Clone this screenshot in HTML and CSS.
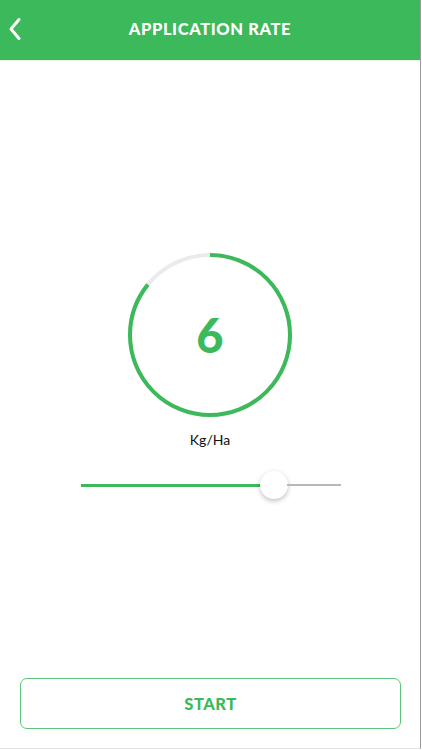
FILE: index.html
```html
<!DOCTYPE html>
<html>
<head>
    <title>Application Rate</title>
    <meta charset="UTF-8">
    <meta name="viewport" content="width=device-width, initial-scale=1.0">
    <link rel="stylesheet" href="styles.css">
</head>
<body>
    <div class="screen">
        <div class="header">
            <button class="back" aria-label="Back">
                <svg width="14" height="24" viewBox="0 0 14 24">
                    <path d="M11 2.5 L3 12 L11 21.5" fill="none" stroke="#fff" stroke-width="3" stroke-linecap="round" stroke-linejoin="round"/>
                </svg>
            </button>
            <h1>APPLICATION RATE</h1>
        </div>

        <div class="content">
            <div class="gauge">
                <svg width="168" height="168" viewBox="0 0 168 168">
                    <circle cx="84" cy="84" r="80" fill="none" stroke="#ebebeb" stroke-width="4"/>
                    <circle class="arc" cx="84" cy="84" r="80" fill="none" stroke="#3cb95a" stroke-width="4"
                        stroke-dasharray="430.8 502.7" transform="rotate(-90 84 84)"/>
                </svg>
                <span class="value">6</span>
            </div>
            <p class="unit">Kg/Ha</p>

            <div class="slider">
                <div class="track-fill"></div>
                <div class="thumb"></div>
                <div class="track-rest"></div>
            </div>
        </div>

        <div class="footer">
            <button class="start">START</button>
        </div>
    </div>
</body>
</html>
```

FILE: styles.css
```css
body {
    margin: 0;
    font-family: Lato, "Open Sans", sans-serif;
    background: #fff;
}
.screen {
    width: 420px;
    height: 748px;
    border-right: 1px solid #9a9a9a;
    border-bottom: 1px solid #e2e2e2;
    display: flex;
    flex-direction: column;
}
.header {
    height: 60px;
    background-color: #3cb95a;
    border-bottom: 1px solid #e6efe8;
    display: flex;
    align-items: center;
    justify-content: center;
    position: relative;
}
.header h1 {
    margin: 0 0 3px;
    color: #fff;
    font-size: 16.5px;
    font-weight: 900;
    letter-spacing: 0.6px;
}
.back {
    position: absolute;
    left: 8px;
    top: 16px;
    background: none;
    border: none;
    padding: 0;
    width: 16px;
    height: 26px;
    display: flex;
    align-items: center;
}
.content {
    flex: 1;
    display: flex;
    flex-direction: column;
    align-items: center;
    padding-top: 190px;
}
.gauge {
    width: 168px;
    height: 168px;
    position: relative;
    display: flex;
    align-items: center;
    justify-content: center;
}
.gauge svg {
    position: absolute;
    left: 0;
    top: 0;
}
.value {
    color: #3cb95a;
    font-size: 47px;
    font-weight: 900;
    line-height: 1;
}
.unit {
    margin: 12px 0 0;
    font-size: 14px;
    color: #111;
}
.slider {
    width: 260px;
    margin-top: 23px;
    margin-left: 1px;
    display: flex;
    align-items: center;
    height: 28px;
}
.track-fill {
    width: 180px;
    height: 3px;
    background: #3cb95a;
}
.thumb {
    width: 28px;
    height: 28px;
    border-radius: 50%;
    background: #fff;
    box-shadow: 0 2px 5px rgba(0, 0, 0, 0.25);
    margin-left: -1px;
}
.track-rest {
    flex: 1;
    height: 2px;
    background: #b8b8b8;
    margin-left: -1px;
}
.footer {
    padding: 0 19px 19px 20px;
}
.start {
    width: 100%;
    height: 51px;
    background: #fff;
    border: 1px solid #5cc476;
    border-radius: 7px;
    color: #3cb95a;
    font-family: Lato, "Open Sans", sans-serif;
    font-size: 16.5px;
    font-weight: 900;
    letter-spacing: 0.5px;
}
```
